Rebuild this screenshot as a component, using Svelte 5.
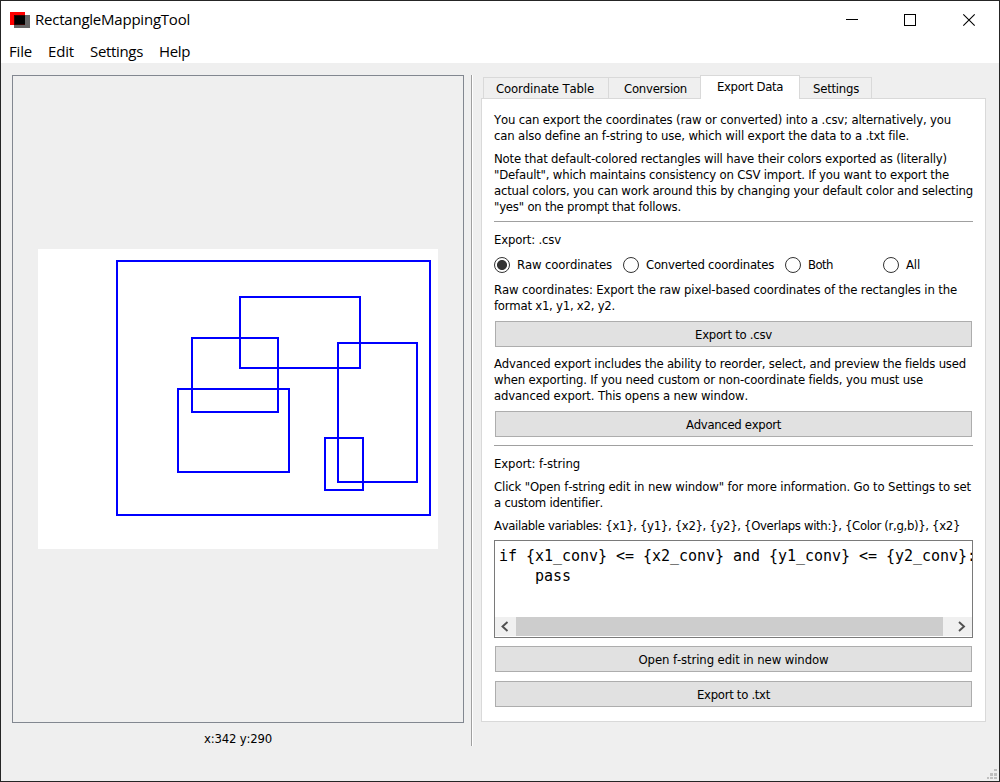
<script>
  const menus = [
    ['File', 23], ['Edit', 26], ['Settings', 53], ['Help', 31]
  ];

  const tabs = [
    { label: 'Coordinate Table', text: 98, width: 126 },
    { label: 'Conversion', text: 63, width: 92 },
    { label: 'Export Data', text: 66, width: 100, active: true },
    { label: 'Settings', text: 46, width: 72 }
  ];

  const rects = [
    [78, 11, 315, 256],
    [201, 47, 122, 73],
    [153, 88, 88, 76],
    [139, 139, 113, 85],
    [299, 93, 81, 141],
    [286, 188, 40, 54]
  ];

  const intro = [
    ['You can export the coordinates (raw or converted) into a .csv; alternatively, you', 457],
    ['can also define an f-string to use, which will export the data to a .txt file.', 415]
  ];
  const note = [
    ['Note that default-colored rectangles will have their colors exported as (literally)', 453],
    ['"Default", which maintains consistency on CSV import. If you want to export the', 455],
    ['actual colors, you can work around this by changing your default color and selecting', 479],
    ['"yes" on the prompt that follows.', 187]
  ];
  const csvHelp = [
    ['Raw coordinates: Export the raw pixel-based coordinates of the rectangles in the', 463],
    ['format x1, y1, x2, y2.', 121]
  ];
  const advanced = [
    ['Advanced export includes the ability to reorder, select, and preview the fields used', 472],
    ['when exporting. If you need custom or non-coordinate fields, you must use', 429],
    ['advanced export. This opens a new window.', 254]
  ];
  const fHelp = [
    ['Click "Open f-string edit in new window" for more information. Go to Settings to set', 477],
    ['a custom identifier.', 109]
  ];
  const variables = [
    ['Available variables: {x1}, {y1}, {x2}, {y2}, {Overlaps with:}, {Color (r,g,b)}, {x2}', 466]
  ];

  const modes = [
    { label: 'Raw coordinates', text: 95, width: 129 },
    { label: 'Converted coordinates', text: 128, width: 162 },
    { label: 'Both', text: 25, width: 98 },
    { label: 'All', text: 14, width: 60 }
  ];
  let mode = $state('Raw coordinates');

  // Tracks a label so that it spans the given number of pixels.
  function fit(node, width) {
    const natural = node.getBoundingClientRect().width;
    node.style.letterSpacing = `${(width - natural) / node.textContent.length}px`;
  }
</script>

{#snippet paragraph(lines)}
  <p>
    {#each lines as [text, width]}
      <span class="line"><span class="t" use:fit={width}>{text}</span></span>
    {/each}
  </p>
{/snippet}

<div class="window">
  <header class="titlebar">
    <svg class="logo" width="20" height="17" viewBox="0 0 20 17">
      <rect width="15" height="13" fill="#f00" />
      <rect x="4" y="3" width="16" height="13" fill="#666" />
      <rect x="4" y="3" width="11" height="10" fill="#300" />
      <rect x="5" y="4" width="10" height="8" fill="#000" />
    </svg>
    <h1><span class="t" use:fit={155}>RectangleMappingTool</span></h1>
    <svg class="controls" width="132" height="14" viewBox="0 0 132 14" fill="none" stroke="#000">
      <path d="M0 6.5H12M58.5 1.5H69.500V12.500H58.500Z" shape-rendering="crispEdges" />
      <path d="M117.300 1.300L128.700 12.700M128.700 1.300L117.300 12.700" stroke-width="1.100" />
    </svg>
  </header>
  <nav class="menubar">
    {#each menus as [label, width]}
      <span class="t" use:fit={width}>{label}</span>
    {/each}
  </nav>

  <main>
    <section class="left">
      <div class="view">
        <svg width="400" height="300">
          <rect width="400" height="300" fill="#fff" />
          {#each rects as [x, y, w, h]}
            <rect x={x + 1} y={y + 1} width={w - 2} height={h - 2} fill="none" stroke="#00f" stroke-width="2" />
          {/each}
        </svg>
      </div>
      <div class="coords"><span class="t" use:fit={68}>x:342 y:290</span></div>
    </section>

    <div class="splitter"></div>

    <section class="right">
      <div class="tabs">
        {#each tabs as tab}
          <div class="tab" class:active={tab.active} style:width="{tab.width}px">
            <span class="t" use:fit={tab.text}>{tab.label}</span>
          </div>
        {/each}
      </div>
      <div class="panel">
        {@render paragraph(intro)}
        {@render paragraph(note)}
        <hr />
        {@render paragraph([['Export: .csv', 67]])}
        <div class="radios">
          {#each modes as m}
            <label style:width="{m.width}px">
              <input type="radio" name="mode" value={m.label} bind:group={mode} />
              <span class="t" use:fit={m.text}>{m.label}</span>
            </label>
          {/each}
        </div>
        {@render paragraph(csvHelp)}
        <button><span class="t" use:fit={77}>Export to .csv</span></button>
        {@render paragraph(advanced)}
        <button><span class="t" use:fit={95}>Advanced export</span></button>
        <hr />
        {@render paragraph([['Export: f-string', 86]])}
        {@render paragraph(fHelp)}
        {@render paragraph(variables)}
        <div class="editor">
          <pre>{'if {x1_conv} <= {x2_conv} and {y1_conv} <= {y2_conv}:\n    pass'}</pre>
          <div class="scrollbar">
            <svg width="21" height="19" fill="none" stroke="#505050" stroke-width="1.900"><path d="M12.500 5L7.500 9.500L12.500 14" /></svg>
            <div class="thumb"></div>
            <svg width="29" height="19" fill="none" stroke="#505050" stroke-width="1.900"><path d="M16 5L21 9.500L16 14" /></svg>
          </div>
        </div>
        <button class="open"><span class="t" use:fit={190}>Open f-string edit in new window</span></button>
        <button><span class="t" use:fit={73}>Export to .txt</span></button>
      </div>
    </section>
  </main>
  <svg class="grip" width="10" height="10" fill="#bfbfbf" shape-rendering="crispEdges">
    <path d="M7 0h3v2h-3zM3 4h3v3h-3zM7 4h3v3h-3zM0 8h2v2h-2zM3 8h3v2h-3zM7 8h3v2h-3z" />
  </svg>
</div>

<style>
  :global(body) { margin: 0; overflow: hidden; }
  .window {
    box-sizing: border-box;
    width: 1000px;
    height: 782px;
    border: 1px solid #252525;
    background: #efefef;
    position: relative;
    color: #000;
    font: 13px/16px "DejaVu Sans Condensed", "DejaVu Sans", sans-serif;
    font-stretch: condensed;
    font-kerning: none;
  }
  .t { white-space: pre; display: inline-block; font-variant-ligatures: none; }
  .titlebar {
    display: flex;
    align-items: center;
    height: 38px;
    background: #fff;
    padding-left: 9px;
  }
  .logo { margin-right: 5px; }
  h1 { margin: 0 0 2px; font: 15px/20px "Open Sans", sans-serif; }
  .controls { margin: 0 0 0 auto; padding-right: 21px; }
  .menubar {
    display: flex;
    gap: 16px;
    height: 24px;
    padding-left: 8px;
    background: #fff;
    font: 15px/24px "Open Sans", sans-serif;
  }
  main { display: flex; padding: 12px 0 0 11px; }
  .left { width: 452px; }
  .view {
    box-sizing: border-box;
    height: 648px;
    border: 1px solid #828790;
    display: flex;
    align-items: center;
    justify-content: center;
  }
  .coords { text-align: center; padding-top: 8px; }
  .splitter {
    width: 1px;
    height: 671px;
    margin: 0 9px 0 7px;
    background: #a0a0a0;
    box-shadow: 1px 0 #fff;
  }
  .right { width: 505px; }
  .tabs {
    display: flex;
    align-items: flex-end;
    height: 23px;
    padding-left: 2px;
  }
  .tab {
    box-sizing: border-box;
    height: 21px;
    border: 1px solid #d9d9d9;
    border-width: 1px 1px 0 0;
    text-align: center;
    line-height: 22px;
  }
  .tab:first-child { border-left-width: 1px; padding-right: 2px; }
  .tab:nth-child(2) { border-right: 0; padding-left: 1px; }
  .tab.active {
    height: 24px;
    background: #fff;
    border-left-width: 1px;
    margin: 0 0 -1px -1px;
    position: relative;
  }
  .tab:last-child { padding-left: 1px; }
  .panel {
    box-sizing: border-box;
    height: 624px;
    background: #fff;
    border: 1px solid #d9d9d9;
    padding: 13px 12px 0;
  }
  p { margin: 0 0 7px; }
  .line { display: block; height: 16px; }
  hr { border: 0; height: 1px; margin: -1px 0 10px; background: #a0a0a0; }
  .radios { display: flex; height: 16px; margin: 9px 0 9px; align-items: center; }
  label { display: flex; align-items: center; gap: 7px; }
  input {
    appearance: none;
    box-sizing: border-box;
    flex: none;
    width: 16px;
    height: 16px;
    margin: 0;
    border: 1px solid #333;
    border-radius: 50%;
  }
  input:checked { background: radial-gradient(circle, #333 4.600px, #fff 5.400px); }
  button {
    display: block;
    box-sizing: border-box;
    width: 477px;
    height: 26px;
    margin: 0 1px 9px;
    padding: 1px 0 0;
    border: 1px solid #adadad;
    background: #e1e1e1;
    color: #000;
    font: inherit;
  }
  .editor {
    box-sizing: border-box;
    width: 479px;
    height: 98px;
    margin-top: -1px;
    border: 1px solid #7a7a7a;
    overflow: hidden;
  }
  pre {
    margin: 0;
    height: 71px;
    padding: 5px 0 0 4px;
    font: 15px/20px "DejaVu Sans Mono", monospace;
    letter-spacing: -0.030px;
  }
  .scrollbar { display: flex; height: 19px; background: #f0f0f0; }
  .thumb { flex: 1; background: #cdcdcd; }
  .open { margin-top: 8px; }
  .grip { position: absolute; right: 2px; bottom: 2px; }
</style>
